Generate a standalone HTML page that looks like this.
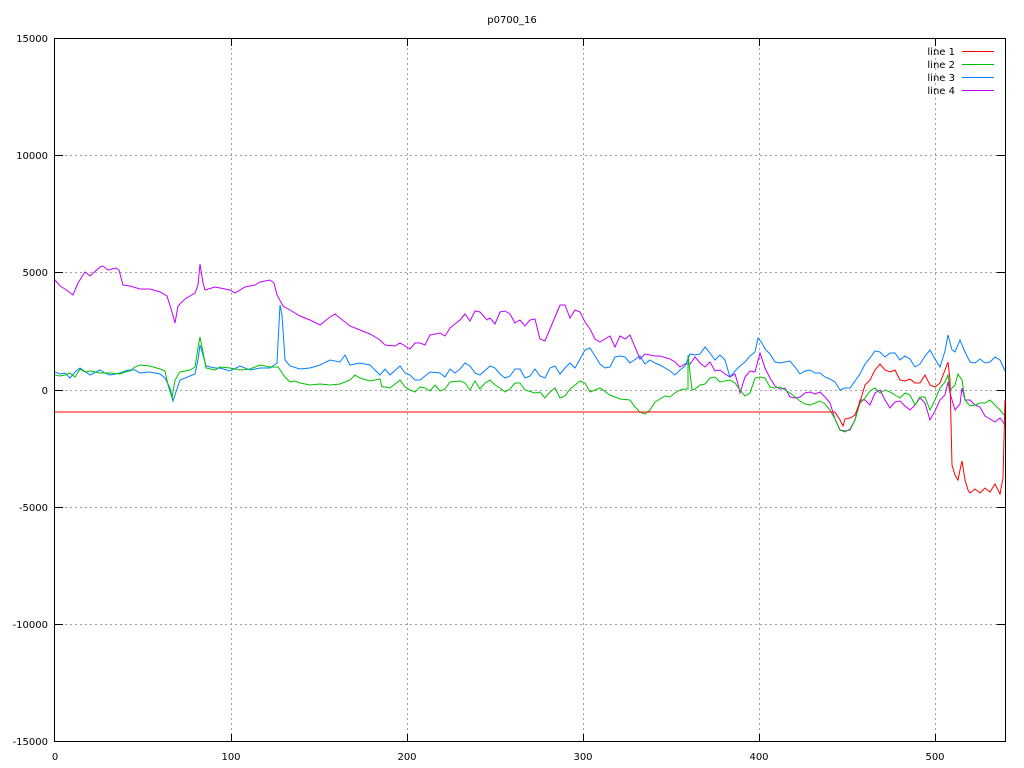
<!DOCTYPE html>
<html><head><meta charset="utf-8"><style>
html,body{margin:0;padding:0;background:#fff;width:1024px;height:768px;overflow:hidden}
svg{display:block}
text{font-family:"DejaVu Sans","Liberation Sans",sans-serif;font-size:10px;fill:#000}
</style></head><body>
<svg width="1024" height="768" viewBox="0 0 1024 768">
<g stroke="#a0a0a0" stroke-width="1" stroke-dasharray="2,3" fill="none">
<line x1="55" y1="155.5" x2="1005" y2="155.5"/>
<line x1="55" y1="272.5" x2="1005" y2="272.5"/>
<line x1="55" y1="390.5" x2="1005" y2="390.5"/>
<line x1="55" y1="507.5" x2="1005" y2="507.5"/>
<line x1="55" y1="624.5" x2="1005" y2="624.5"/>
<line x1="231.5" y1="38" x2="231.5" y2="742"/>
<line x1="407.5" y1="38" x2="407.5" y2="742"/>
<line x1="583.5" y1="38" x2="583.5" y2="742"/>
<line x1="759.5" y1="38" x2="759.5" y2="742"/>
<line x1="935.5" y1="38" x2="935.5" y2="742"/>
</g>
<g stroke="#000" stroke-width="1" fill="none">
<rect x="54.5" y="38.5" width="951" height="703"/>
<path d="M55 155.5h8M55 272.5h8M55 390.5h8M55 507.5h8M55 624.5h8M1005 155.5h-8M1005 272.5h-8M1005 390.5h-8M1005 507.5h-8M1005 624.5h-8M231.5 742v-8M407.5 742v-8M583.5 742v-8M759.5 742v-8M935.5 742v-8M231.5 38v8M407.5 38v8M583.5 38v8M759.5 38v8M935.5 38v8"/>
</g>
<g text-anchor="end">
<text x="48" y="42">15000</text>
<text x="48" y="159">10000</text>
<text x="48" y="276">5000</text>
<text x="48" y="394">0</text>
<text x="48" y="511">-5000</text>
<text x="48" y="628">-10000</text>
<text x="48" y="745">-15000</text>
</g>
<g text-anchor="middle">
<text x="55" y="760">0</text>
<text x="231" y="760">100</text>
<text x="407" y="760">200</text>
<text x="583" y="760">300</text>
<text x="759" y="760">400</text>
<text x="935" y="760">500</text>
<text x="512" y="23">p0700_16</text>
</g>
<g text-anchor="end" style="font-family:'Liberation Mono',monospace">
<text x="955" y="55">line 1</text>
<text x="955" y="68">line 2</text>
<text x="955" y="81">line 3</text>
<text x="955" y="94">line 4</text>
</g>
<g fill="none" stroke-width="1">
<line x1="962" y1="51.5" x2="994" y2="51.5" stroke="#ff0000"/>
<line x1="962" y1="64.5" x2="994" y2="64.5" stroke="#00c000"/>
<line x1="962" y1="77.5" x2="994" y2="77.5" stroke="#0080ff"/>
<line x1="962" y1="90.5" x2="994" y2="90.5" stroke="#c000ff"/>
<polyline stroke="#c000ff" points="55,280 60,286 65,289 73,295 78,283 85,272 90,276 100,267 103,266 108,270 116,268 119,270 123,285 130,286 140,289 150,289 160,292 167,296 172,312 175,323 178,306 185,299 195,293 198,285 200,264 203,283 205,290 215,287 230,290 235,293 245,287 255,285 260,282 270,280 274,283 277,295 283,306 290,310 300,316 310,320 320,325 330,317 335,314 340,318 350,326 360,330 370,334 380,340 385,345 395,346 400,343 405,346 410,349 415,343 420,343 425,345 430,335 440,333 445,336 450,328 455,324 460,320 465,314 470,321 475,311 480,312 487,320 490,318 495,324 500,312 505,311 510,314 515,323 520,320 525,326 530,320 535,319 540,339 545,341 550,329 555,317 560,305 565,305 570,318 575,310 580,312 585,322 590,329 595,339 600,342 605,339 610,336 615,347 620,336 625,339 630,335 640,359 645,354 650,355 655,356 660,356 670,359 675,362 680,367 685,364 690,364 695,357 700,363 705,367 710,362 715,371 720,370 725,374 730,377 735,374 738,384 740,393 745,377 750,371 755,372 760,353 765,368 770,378 775,386 780,389 785,388 790,397 795,398 800,397 805,393 810,392 815,394 820,392 825,397 830,403 835,419 840,430 845,431 850,430 855,420 860,400 865,400 870,405 875,393 880,390 885,400 890,408 895,402 900,401 905,406 910,410 915,405 920,398 925,403 930,420 935,411 940,400 945,395 948,382 950,393 955,410 960,404 962,388 965,400 970,400 975,405 980,407 985,416 990,419 995,422 1000,418 1005,425"/>
<polyline stroke="#0080ff" points="55,372 60,374 65,373 70,378 75,372 80,368 90,375 100,370 105,373 110,375 120,373 128,370 135,370 140,373 150,372 160,374 165,378 170,388 173,401 176,392 180,380 190,376 195,374 198,360 200,345 203,355 206,366 215,368 220,368 230,371 240,366 250,370 260,368 270,368 277,363 280,305 282,315 285,360 290,366 300,369 310,368 320,365 330,360 340,362 345,355 350,365 360,363 370,365 380,375 385,369 390,375 400,366 405,373 410,375 415,380 420,380 430,372 440,373 445,377 450,369 455,373 460,369 465,363 470,366 475,373 480,375 490,366 495,368 500,374 505,378 510,376 515,369 520,369 525,378 530,376 535,369 540,376 545,378 550,368 555,366 560,374 565,368 570,363 575,368 580,359 585,350 590,348 595,356 600,364 605,368 610,367 615,357 620,356 625,357 630,363 640,356 645,364 650,360 655,363 660,365 670,371 675,375 680,370 685,366 690,354 695,355 700,354 705,347 710,353 715,360 720,355 725,360 730,377 735,371 740,366 745,362 750,356 755,352 758,338 762,343 765,349 770,354 775,362 780,363 790,361 795,367 800,374 805,371 810,370 815,373 820,373 825,377 830,379 835,382 840,390 845,388 850,388 855,381 860,374 865,364 870,358 875,351 880,352 885,357 890,353 895,353 900,360 905,356 910,359 915,367 920,364 925,356 930,350 935,359 940,367 945,351 948,335 952,350 955,352 960,340 965,352 970,362 975,363 980,359 985,363 990,362 995,357 1000,360 1005,371"/>
<polyline stroke="#00c000" points="55,375 60,376 65,375 70,373 75,377 80,369 85,372 90,371 100,373 110,373 120,374 125,372 130,371 135,367 140,365 150,366 160,369 165,371 168,385 172,398 175,380 180,372 190,370 195,367 198,348 200,337 203,352 206,368 215,370 220,367 230,368 240,370 250,369 260,365 270,367 278,367 285,377 290,382 295,381 300,383 310,385 320,384 330,385 340,384 350,380 355,375 360,378 370,381 380,379 382,387 385,387 390,388 400,380 405,387 410,390 415,392 420,387 425,388 430,391 435,385 440,391 445,389 450,382 460,381 465,383 470,390 475,381 480,389 485,383 490,380 495,385 500,388 505,392 510,389 515,383 520,383 525,390 535,393 540,392 545,398 550,392 555,388 560,398 565,396 570,389 575,385 580,381 585,383 590,392 600,388 610,395 620,399 630,400 635,407 640,412 645,414 650,410 655,402 660,399 665,396 670,397 675,393 680,390 685,389 688,389 688,355 692,390 695,389 700,385 705,384 710,378 715,377 720,382 730,380 735,383 740,390 745,396 750,393 755,378 760,377 765,378 770,387 775,388 780,387 785,390 790,393 795,397 800,401 805,404 810,405 820,401 825,404 830,410 835,419 840,430 845,432 850,429 855,420 860,403 865,398 870,391 875,388 880,393 885,390 890,392 895,395 900,398 905,393 910,395 915,405 920,397 925,397 930,410 935,400 940,388 945,382 948,375 950,390 955,385 958,374 962,380 965,400 970,406 975,405 980,403 985,403 990,400 995,405 1000,410 1005,416"/>
<polyline stroke="#ff0000" points="55,412 835,412 840,420 843,426 845,419 850,418 855,415 860,402 865,385 870,380 875,370 880,364 885,370 890,372 895,370 900,380 905,381 910,379 915,383 920,383 925,375 930,385 935,387 940,383 945,370 948,362 950,380 952,465 955,475 958,480 960,470 962,461 965,480 968,490 970,493 975,489 980,493 985,488 990,492 995,484 1000,494 1003,478 1005,400"/>
</g>
</svg>
</body></html>
